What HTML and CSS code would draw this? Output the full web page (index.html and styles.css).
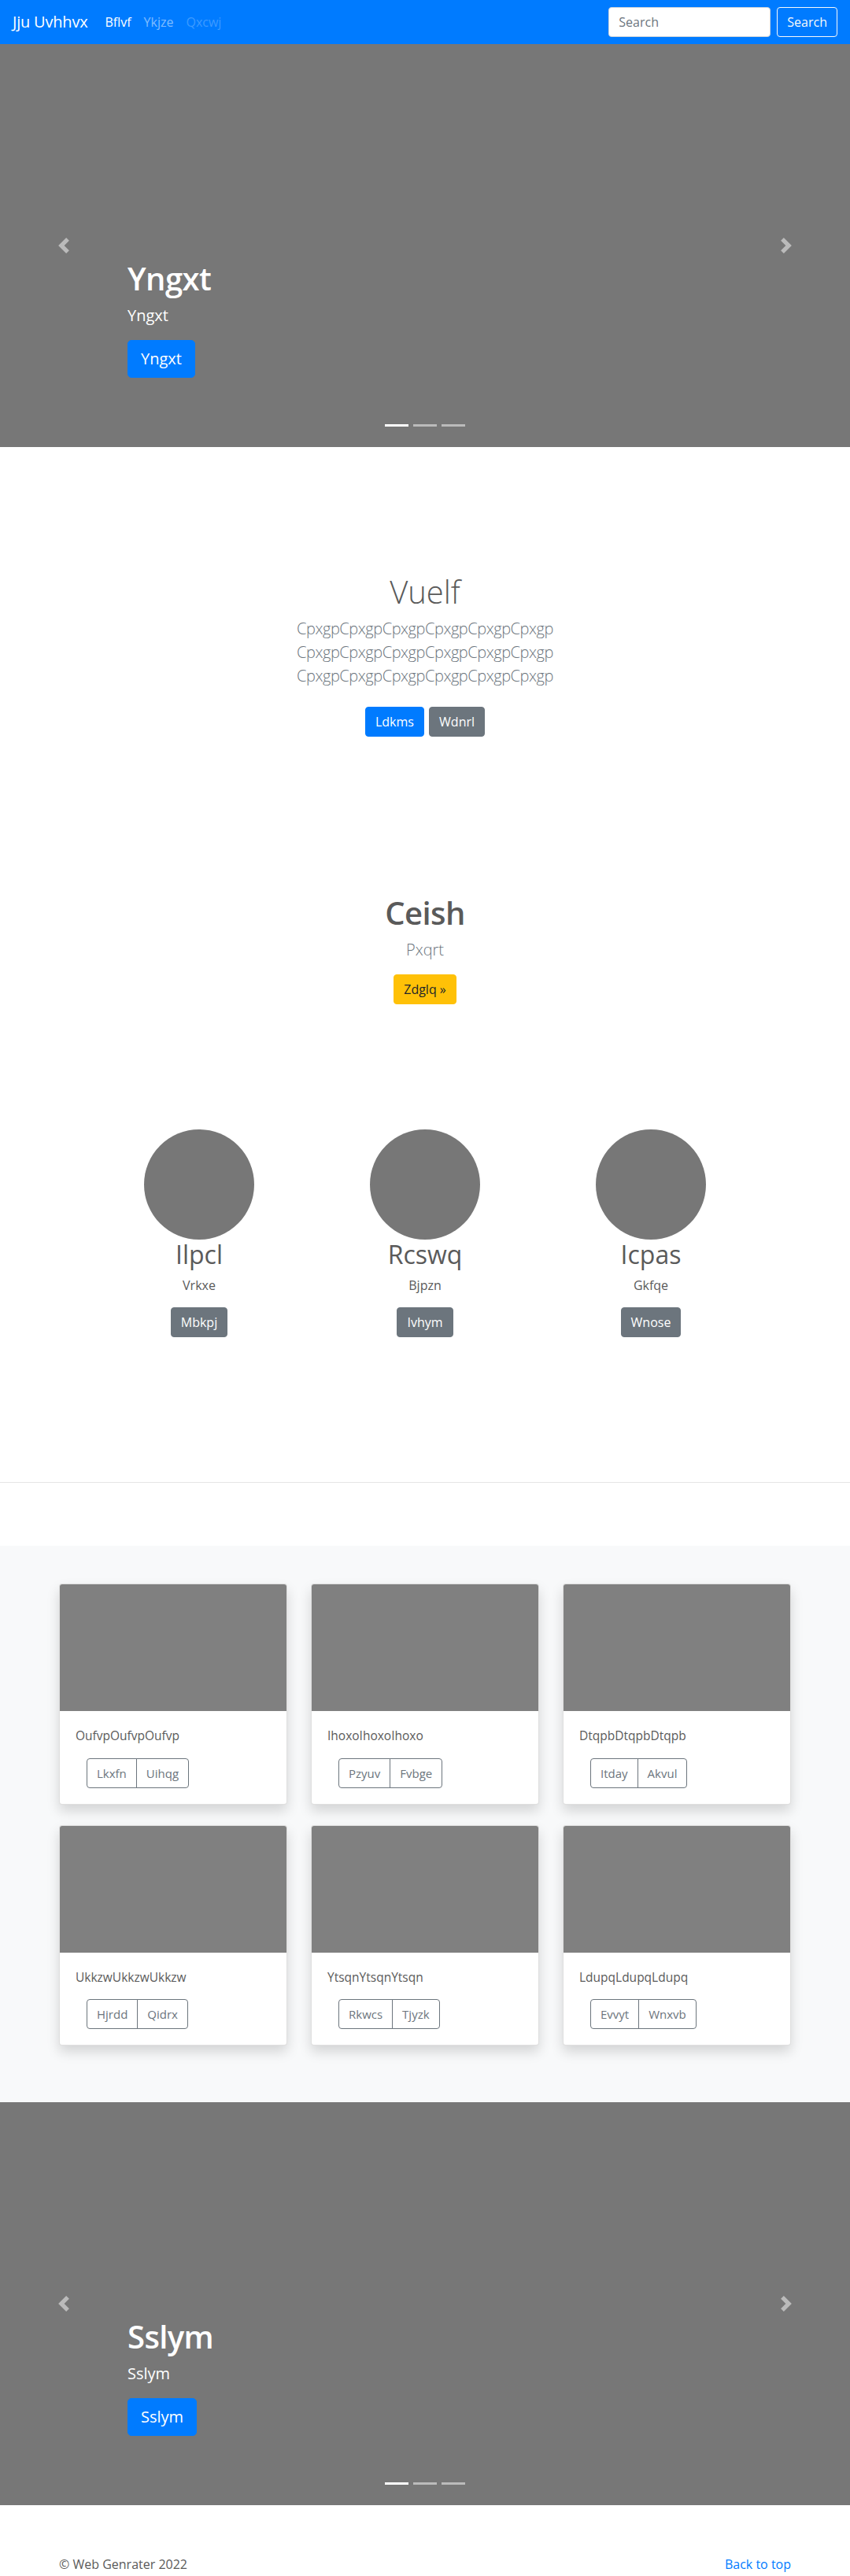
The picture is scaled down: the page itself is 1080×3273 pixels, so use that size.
FILE: index.html
```
<!DOCTYPE html>
<html lang="en">
<head>
<meta charset="utf-8">
<title>Jju Uvhhvx</title>
<link rel="stylesheet" href="styles.css">
</head>
<body>
<nav class="navbar">
  <a class="brand" href="#">Jju Uvhhvx</a>
  <ul class="nav">
    <li><a class="nav-link active" href="#">Bflvf</a></li>
    <li><a class="nav-link" href="#">Ykjze</a></li>
    <li><a class="nav-link disabled" href="#">Qxcwj</a></li>
  </ul>
  <form class="search">
    <input class="search-input" type="text" placeholder="Search">
    <button class="btn btn-outline-light" type="button">Search</button>
  </form>
</nav>

<div class="carousel">
  <ol class="indicators"><li class="on"></li><li></li><li></li></ol>
  <div class="caption">
    <h1 class="caption-title">Yngxt</h1>
    <p class="caption-text">Yngxt</p>
    <p class="caption-action"><a class="btn btn-lg btn-primary" href="#">Yngxt</a></p>
  </div>
  <a class="control prev" href="#"><svg width="20" height="20" viewBox="0 0 8 8"><path fill="#fff" d="M5.25 0l-4 4 4 4 1.5-1.5L4.25 4l2.5-2.5L5.25 0z"/></svg></a>
  <a class="control next" href="#"><svg width="20" height="20" viewBox="0 0 8 8"><path fill="#fff" d="M2.75 0l-1.5 1.5L3.75 4l-2.5 2.5L2.75 8l4-4-4-4z"/></svg></a>
</div>

<section class="intro">
  <h1 class="intro-title">Vuelf</h1>
  <p class="lead muted intro-lead">CpxgpCpxgpCpxgpCpxgpCpxgpCpxgp CpxgpCpxgpCpxgpCpxgpCpxgpCpxgp CpxgpCpxgpCpxgpCpxgpCpxgpCpxgp</p>
  <p class="intro-actions">
    <a class="btn btn-primary" href="#">Ldkms</a>
    <a class="btn btn-secondary" href="#">Wdnrl</a>
  </p>
</section>

<section class="callout">
  <h1 class="callout-title">Ceish</h1>
  <p class="lead muted">Pxqrt</p>
  <p><a class="btn btn-warning" href="#">Zdglq »</a></p>
</section>

<section class="marketing">
  <div class="feature">
    <div class="avatar"></div>
    <h2>Ilpcl</h2>
    <p>Vrkxe</p>
    <p><a class="btn btn-secondary" href="#">Mbkpj</a></p>
  </div>
  <div class="feature">
    <div class="avatar"></div>
    <h2>Rcswq</h2>
    <p>Bjpzn</p>
    <p><a class="btn btn-secondary" href="#">Ivhym</a></p>
  </div>
  <div class="feature">
    <div class="avatar"></div>
    <h2>Icpas</h2>
    <p>Gkfqe</p>
    <p><a class="btn btn-secondary" href="#">Wnose</a></p>
  </div>
</section>

<hr class="divider">

<section class="album">
  <div class="cards">
    <div class="card"><div class="card-img"></div><div class="card-body"><p class="card-text">OufvpOufvpOufvp</p><div class="btn-group"><a class="btn btn-outline-secondary" href="#">Lkxfn</a><a class="btn btn-outline-secondary" href="#">Uihqg</a></div></div></div>
    <div class="card"><div class="card-img"></div><div class="card-body"><p class="card-text">IhoxoIhoxoIhoxo</p><div class="btn-group"><a class="btn btn-outline-secondary" href="#">Pzyuv</a><a class="btn btn-outline-secondary" href="#">Fvbge</a></div></div></div>
    <div class="card"><div class="card-img"></div><div class="card-body"><p class="card-text">DtqpbDtqpbDtqpb</p><div class="btn-group"><a class="btn btn-outline-secondary" href="#">Itday</a><a class="btn btn-outline-secondary" href="#">Akvul</a></div></div></div>
    <div class="card"><div class="card-img"></div><div class="card-body"><p class="card-text">UkkzwUkkzwUkkzw</p><div class="btn-group"><a class="btn btn-outline-secondary" href="#">Hjrdd</a><a class="btn btn-outline-secondary" href="#">Qidrx</a></div></div></div>
    <div class="card"><div class="card-img"></div><div class="card-body"><p class="card-text">YtsqnYtsqnYtsqn</p><div class="btn-group"><a class="btn btn-outline-secondary" href="#">Rkwcs</a><a class="btn btn-outline-secondary" href="#">Tjyzk</a></div></div></div>
    <div class="card"><div class="card-img"></div><div class="card-body"><p class="card-text">LdupqLdupqLdupq</p><div class="btn-group"><a class="btn btn-outline-secondary" href="#">Evvyt</a><a class="btn btn-outline-secondary" href="#">Wnxvb</a></div></div></div>
  </div>
</section>

<div class="carousel">
  <ol class="indicators"><li class="on"></li><li></li><li></li></ol>
  <div class="caption">
    <h1 class="caption-title">Sslym</h1>
    <p class="caption-text">Sslym</p>
    <p class="caption-action"><a class="btn btn-lg btn-primary" href="#">Sslym</a></p>
  </div>
  <a class="control prev" href="#"><svg width="20" height="20" viewBox="0 0 8 8"><path fill="#fff" d="M5.25 0l-4 4 4 4 1.5-1.5L4.25 4l2.5-2.5L5.25 0z"/></svg></a>
  <a class="control next" href="#"><svg width="20" height="20" viewBox="0 0 8 8"><path fill="#fff" d="M2.75 0l-1.5 1.5L3.75 4l-2.5 2.5L2.75 8l4-4-4-4z"/></svg></a>
</div>

<footer class="footer">
  <p>© Web Genrater 2022</p>
  <p><a class="top-link" href="#">Back to top</a></p>
</footer>
</body>
</html>
```

FILE: styles.css
```
* { box-sizing: border-box; }

body {
  margin: 0;
  font-family: "Open Sans", "Noto Sans", sans-serif;
  font-size: 16px;
  line-height: 1.5;
  color: #5a5a5a;
  background: #fff;
}

p { margin: 0 0 16px; }
h1, h2 { margin: 0 0 8px; line-height: 1.2; }
a { text-decoration: none; }

/* navbar */
.navbar {
  height: 56px;
  background: #007bff;
  display: flex;
  align-items: center;
  padding: 8px 16px;
}
.brand {
  color: #fff;
  font-size: 20px;
  line-height: 30px;
  margin-right: 14px;
  white-space: nowrap;
  letter-spacing: -0.2px;
}
.nav {
  display: flex;
  list-style: none;
  margin: 0;
  padding: 0;
  flex: 1;
}
.nav-link {
  display: block;
  padding: 8px;
  color: rgba(255,255,255,.5);
}
.nav-link.active { color: #fff; }
.nav-link.disabled { color: rgba(255,255,255,.25); }
.search { display: flex; gap: 8px; margin: 0; }
.search-input {
  width: 206px;
  height: 38px;
  padding: 6px 12px;
  font: inherit;
  font-size: 16px;
  color: #495057;
  border: 1px solid #ced4da;
  border-radius: 4px;
}
.search-input::placeholder { color: #6c757d; }

/* buttons */
.btn {
  display: inline-block;
  font-family: inherit;
  font-size: 16px;
  line-height: 24px;
  padding: 6px 12px;
  border: 1px solid transparent;
  border-radius: 4px;
  background: none;
  cursor: pointer;
  vertical-align: middle;
}
.btn-lg { font-size: 20px; line-height: 30px; padding: 8px 16px; border-radius: 5px; }
.btn-primary { background: #007bff; border-color: #007bff; color: #fff; }
.btn-secondary { background: #6c757d; border-color: #6c757d; color: #fff; }
.btn-warning { background: #ffc107; border-color: #ffc107; color: #212529; }
.btn-outline-light { border-color: #f8f9fa; color: #f8f9fa; }
.btn-outline-secondary { border-color: #6c757d; color: #6c757d; }

/* carousel */
.carousel {
  position: relative;
  height: 512px;
  background: #777;
  overflow: hidden;
}
.caption {
  position: absolute;
  left: 15%;
  right: 15%;
  bottom: 52px;
  padding: 20px 0;
  color: #fff;
}
.caption-title { font-size: 40px; font-weight: 600; margin-bottom: 8px; letter-spacing: -0.6px; }
.caption-text { font-size: 20px; line-height: 30px; }
.caption-action { margin-bottom: 16px; }
.control {
  position: absolute;
  top: 0;
  bottom: 0;
  width: 15%;
  display: flex;
  align-items: center;
  justify-content: center;
  opacity: .5;
}
.control.prev { left: 0; }
.control.next { right: 0; }
.indicators {
  position: absolute;
  left: 0;
  right: 0;
  bottom: 26px;
  margin: 0;
  padding: 0;
  list-style: none;
  display: flex;
  justify-content: center;
}
.indicators li {
  width: 30px;
  height: 3px;
  margin: 0 3px;
  background: rgba(255,255,255,.5);
}
.indicators li.on { background: #fff; }

/* intro */
.intro { text-align: center; padding-top: 160px; }
.intro-title { font-size: 40px; font-weight: 300; margin-bottom: 8px; }
.lead { font-size: 20px; line-height: 30px; font-weight: 300; }
.muted { color: #6c757d; }
.intro-lead { width: 450px; margin: 0 auto 24px; letter-spacing: -0.45px; }
.intro-actions { margin: 0; }
.intro-actions .btn { margin: 0 1px; }

/* callout */
.callout { text-align: center; padding-top: 200px; }
.callout-title { font-size: 40px; font-weight: 600; letter-spacing: -0.6px; }

/* marketing */
.marketing {
  display: grid;
  grid-template-columns: repeat(3, 287px);
  justify-content: center;
  padding-top: 143px;
  text-align: center;
}
.avatar {
  width: 140px;
  height: 140px;
  border-radius: 50%;
  background: #777;
  margin: 0 auto;
}
.feature h2 { font-size: 32px; font-weight: 400; margin: 0 0 8px; }

.divider {
  margin: 168px 0 80px;
  border: 0;
  border-top: 1px solid rgba(0,0,0,.1);
}

/* album */
.album { background: #f8f9fa; padding: 48px 0; }
.cards {
  width: 960px;
  margin: 0 auto;
  display: grid;
  grid-template-columns: repeat(3, 1fr);
  gap: 26px 30px;
  padding: 0 15px 24px;
}
.card {
  background: #fff;
  border: 1px solid rgba(0,0,0,.125);
  border-radius: 4px;
  overflow: hidden;
  box-shadow: 0 8px 16px rgba(0,0,0,.15);
}
.card-img { height: 161px; background: #808080; }
.card-body { padding: 20px; }
.card-text { margin-bottom: 16px; font-size: 15.5px; }
.btn-group { display: inline-flex; margin-left: 14px; }
.btn-group .btn { font-size: 15px; }
.btn-group .btn:first-child { border-radius: 4px 0 0 4px; }
.btn-group .btn:last-child { border-radius: 0 4px 4px 0; margin-left: -1px; }

/* footer */
.footer {
  width: 960px;
  margin: 0 auto;
  padding: 63px 15px 48px;
  display: flex;
  justify-content: space-between;
}
.top-link { color: #007bff; }
```
